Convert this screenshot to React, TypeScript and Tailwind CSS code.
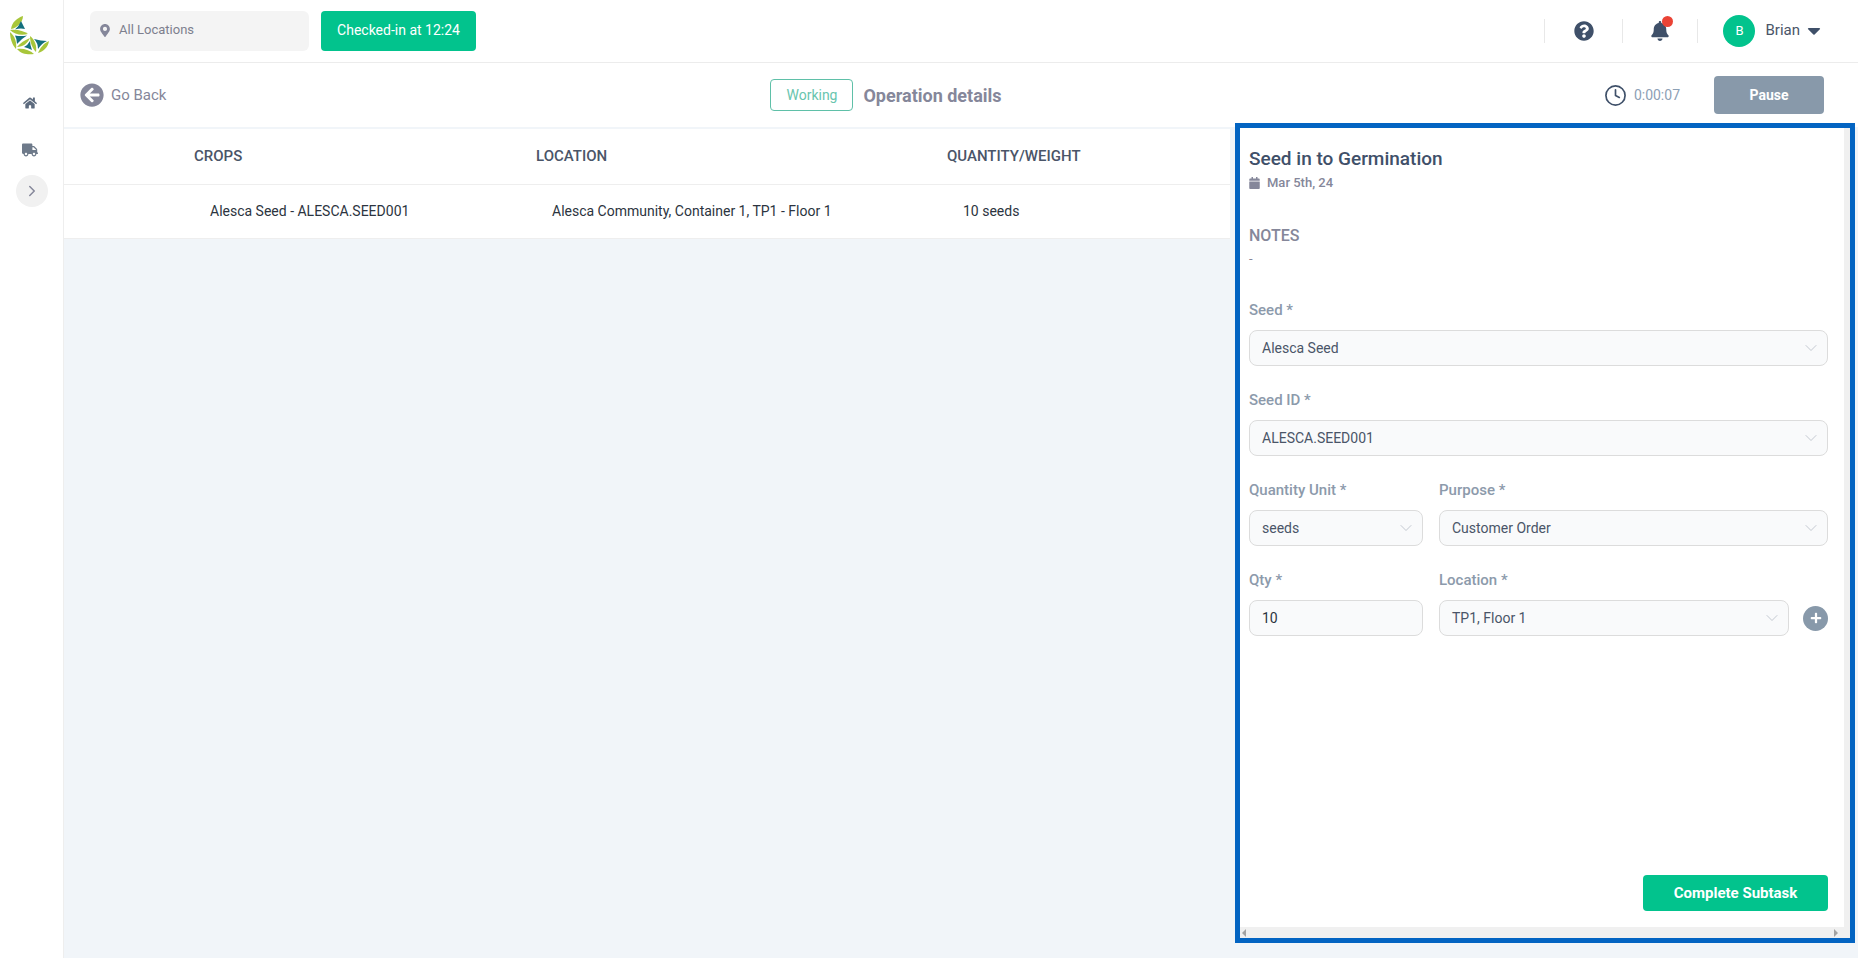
import { ChevronDown, ChevronRight, Clock } from "lucide-react"
import {
  FaArrowCircleLeft,
  FaBell,
  FaCalendar,
  FaCaretDown,
  FaHome,
  FaMapMarkerAlt,
  FaPlus,
  FaQuestionCircle,
  FaTruck,
} from "react-icons/fa"

function Logo() {
  const lime = "#a8c63a"
  const teal = "#136f7d"
  return (
    <svg viewBox="0 0 40 39" className="w-[40px] h-[39px]">
      <path d="M13 0C13 6 7 12 1 13C2 6 7 2 13 0Z" fill={lime} />
      <path d="M11 5L15 13Q10 12 5 13.500Q9 10 11 5Z" fill={teal} />
      <path d="M0 14C7 13 14 15 18 18C11 20 4 18 0 14Z" fill={lime} />
      <path d="M0 16C5 20 7 27 6 33C2 29 0 22 0 16Z" fill={lime} />
      <path d="M5 19.500Q11 20.500 17 19.500Q11 23 7 28Q7 23 5 19.500Z" fill={teal} />
      <path d="M7 31C10 27 15 24 20 22C18 27 13 31 7 31Z" fill={lime} />
      <path d="M20 25Q18 29 14 31Q18 32 22 34Q20 29 20 25Z" fill={teal} />
      <path d="M7 33C13 32 20 34 24 38C18 39 11 38 7 33Z" fill={lime} />
      <path d="M20 20C25 24 27 30 26 36C22 32 20 26 20 20Z" fill={lime} />
      <path d="M24 23Q31 25 37 25Q32 27 28 33Q28 27 24 23Z" fill={teal} />
      <path d="M28 37C30 32 34 27 39 25C38 31 34 35 28 37Z" fill={lime} />
    </svg>
  )
}

function Field({ label, className, children }: { label: string; className?: string; children: React.ReactNode }) {
  return (
    <div className={className}>
      <div className="h-[20px] text-[15px] leading-[20px] font-medium text-[#8c9aab]">{label}</div>
      {children}
    </div>
  )
}

function SelectBox({ value, className }: { value: string; className?: string }) {
  return (
    <div className={`mt-[10px] flex h-[36px] items-center justify-between rounded-[8px] border border-[#dcdcdc] bg-[#f9fafb] pl-[12px] pr-[6px] text-[14px] text-[#4a5568] ${className ?? ""}`}>
      <span>{value}</span>
      <ChevronDown className="h-[20px] w-[20px] text-[#b8bec8]" strokeWidth={1} />
    </div>
  )
}

export default function App() {
  return (
    <div className="flex h-screen w-full overflow-hidden bg-white font-['Roboto',sans-serif]">
      {/* Sidebar */}
      <div className="flex w-[64px] shrink-0 flex-col border-r border-[#eeeeee] bg-white">
        <div className="ml-[10px] mt-[16px]">
          <Logo />
        </div>
        <FaHome className="ml-[23px] mt-[41px] h-[14px] w-[14px] text-[#5d6b7e]" />
        <FaTruck className="ml-[22px] mt-[33px] h-[14px] w-[16px] text-[#6e7a8a]" />
        <div className="ml-[16px] mt-[18px] flex h-[32px] w-[32px] items-center justify-center rounded-full bg-[#f1f1f1]">
          <ChevronRight className="h-[18px] w-[18px] text-[#85879a]" strokeWidth={2} />
        </div>
      </div>

      <div className="flex min-w-0 flex-1 flex-col">
        {/* Top bar */}
        <div className="flex h-[63px] shrink-0 items-center border-b border-[#ececec] bg-white pb-[1px] pl-[26px]">
          <div className="flex h-[40px] w-[219px] items-center rounded-[6px] bg-[#f4f4f4] pb-[1px] pl-[10px] text-[13px] text-[#7d7f8e]">
            <FaMapMarkerAlt className="h-[13px] w-[10px] text-[#85879a]" />
            <span className="ml-[9px]">All Locations</span>
          </div>
          <div className="ml-[12px] flex h-[40px] w-[155px] items-center justify-center rounded-[4px] bg-[#02c38d] text-[14px] text-white">
            Checked-in at 12:24
          </div>
          <div className="ml-auto flex items-center">
            <div className="h-[24px] w-px bg-[#e8e8e8]" />
            <div className="flex w-[77px] justify-center">
              <FaQuestionCircle className="h-[20px] w-[20px] text-[#3f5069]" />
            </div>
            <div className="h-[24px] w-px bg-[#e8e8e8]" />
            <div className="flex w-[74px] justify-center">
              <div className="relative">
                <FaBell className="h-[20px] w-[18px] text-[#3f5069]" />
                <div className="absolute right-[-4px] top-[-5px] h-[11px] w-[11px] rounded-full bg-[#ea4335]" />
              </div>
            </div>
            <div className="h-[24px] w-px bg-[#e8e8e8]" />
            <div className="ml-[25px] flex h-[32px] w-[32px] items-center justify-center rounded-full bg-[#02c38d] text-[13px] text-white">
              B
            </div>
            <span className="ml-[10px] text-[15px] text-[#4a5568]">Brian</span>
            <FaCaretDown className="ml-[7px] mr-[37px] h-[21px] w-[14px] text-[#3f5069]" />
          </div>
        </div>

        {/* Sub header */}
        <div className="flex h-[64px] shrink-0 items-center bg-white pl-[16px] pr-[34px]">
          <FaArrowCircleLeft className="h-[24px] w-[24px] text-[#85879a]" />
          <span className="ml-[7px] text-[15px] text-[#85879a]">Go Back</span>
          <div className="ml-[604px] flex h-[32px] w-[83px] items-center justify-center rounded-[4px] border border-[#5fc0a8] text-[14px] text-[#69c5ae]">
            Working
          </div>
          <span className="ml-[10px] text-[18px] font-bold text-[#85879a]">Operation details</span>
          <Clock className="ml-auto h-[23px] w-[23px] text-[#3f5069]" strokeWidth={1.75} />
          <span className="ml-[7px] text-[14px] text-[#8da0b5]">0:00:07</span>
          <div className="ml-[34px] flex h-[38px] w-[110px] items-center justify-center rounded-[4px] bg-[#8899aa] text-[14px] font-bold text-white">
            Pause
          </div>
        </div>

        {/* Body */}
        <div className="flex min-h-0 flex-1 bg-[#f1f5f9]">
          <div className="flex-1">
            <div className="border-t-2 border-[#f1f5f9] bg-white">
              <div className="grid h-[56px] grid-cols-[342px_411px_1fr] items-center border-b border-[#eeeeee] pl-[130px] text-[15px] font-medium text-[#4a5568]">
                <div>CROPS</div>
                <div>LOCATION</div>
                <div>QUANTITY/WEIGHT</div>
              </div>
              <div className="grid h-[54px] grid-cols-[342px_411px_1fr] items-center border-b border-[#eeeeee] pl-[146px] text-[14px] text-[#2c3440]">
                <div>Alesca Seed - ALESCA.SEED001</div>
                <div>Alesca Community, Container 1, TP1 - Floor 1</div>
                <div>10 seeds</div>
              </div>
            </div>
          </div>

          {/* Subtask panel */}
          <div className="relative z-10 -mt-[4px] mb-[15px] ml-[5px] mr-[3px] flex w-[620px] shrink-0 flex-col border-[5px] border-[#0364c2] bg-white">
            <div className="flex min-h-0 flex-1">
              <div className="flex min-w-0 flex-1 flex-col pb-[16px] pl-[9px] pr-[16px] pt-[19px]">
                <div className="text-[19px] font-medium leading-[24px] text-[#3f5069]">Seed in to Germination</div>
                <div className="mt-[4px] flex h-[16px] items-center text-[13px] font-medium text-[#85879a]">
                  <FaCalendar className="h-[12px] w-[11px]" />
                  <span className="ml-[7px]">Mar 5th, 24</span>
                </div>
                <div className="mt-[35px] text-[16px] font-medium leading-[20px] text-[#85879a]">NOTES</div>
                <div className="mt-[5px] text-[13px] leading-[16px] text-[#85879a]">-</div>

                <Field label="Seed *" className="mt-[33px]">
                  <SelectBox value="Alesca Seed" />
                </Field>
                <Field label="Seed ID *" className="mt-[24px]">
                  <SelectBox value="ALESCA.SEED001" />
                </Field>
                <div className="mt-[24px] grid grid-cols-[174px_1fr] gap-x-[16px] gap-y-[24px]">
                  <Field label="Quantity Unit *">
                    <SelectBox value="seeds" />
                  </Field>
                  <Field label="Purpose *">
                    <SelectBox value="Customer Order" />
                  </Field>
                  <Field label="Qty *">
                    <div className="mt-[10px] flex h-[36px] items-center rounded-[8px] border border-[#dcdcdc] bg-[#f9fafb] pl-[12px] text-[14px] text-[#2c3440]">
                      10
                    </div>
                  </Field>
                  <Field label="Location *">
                    <div className="flex items-center">
                      <SelectBox value="TP1, Floor 1" className="min-w-0 flex-1" />
                      <div className="ml-[14px] mt-[10px] flex h-[25px] w-[25px] items-center justify-center rounded-full bg-[#8899aa]">
                        <FaPlus className="h-[12px] w-[12px] text-white" />
                      </div>
                    </div>
                  </Field>
                </div>

                <div className="mt-auto flex h-[36px] w-[185px] items-center justify-center self-end rounded-[4px] bg-[#02c38d] text-[15px] font-bold text-white">
                  Complete Subtask
                </div>
              </div>
              <div className="w-[6px] shrink-0 bg-[#f0f0f0]" />
            </div>
            <div className="flex h-[11px] shrink-0 items-center justify-between bg-[#f0f0f0] pl-[2px] pr-[12px]">
              <div className="h-0 w-0 border-y-[4px] border-r-[4px] border-y-transparent border-r-[#a3a3a3]" />
              <div className="h-0 w-0 border-y-[4px] border-l-[4px] border-y-transparent border-l-[#a3a3a3]" />
            </div>
          </div>
        </div>
      </div>
    </div>
  )
}
